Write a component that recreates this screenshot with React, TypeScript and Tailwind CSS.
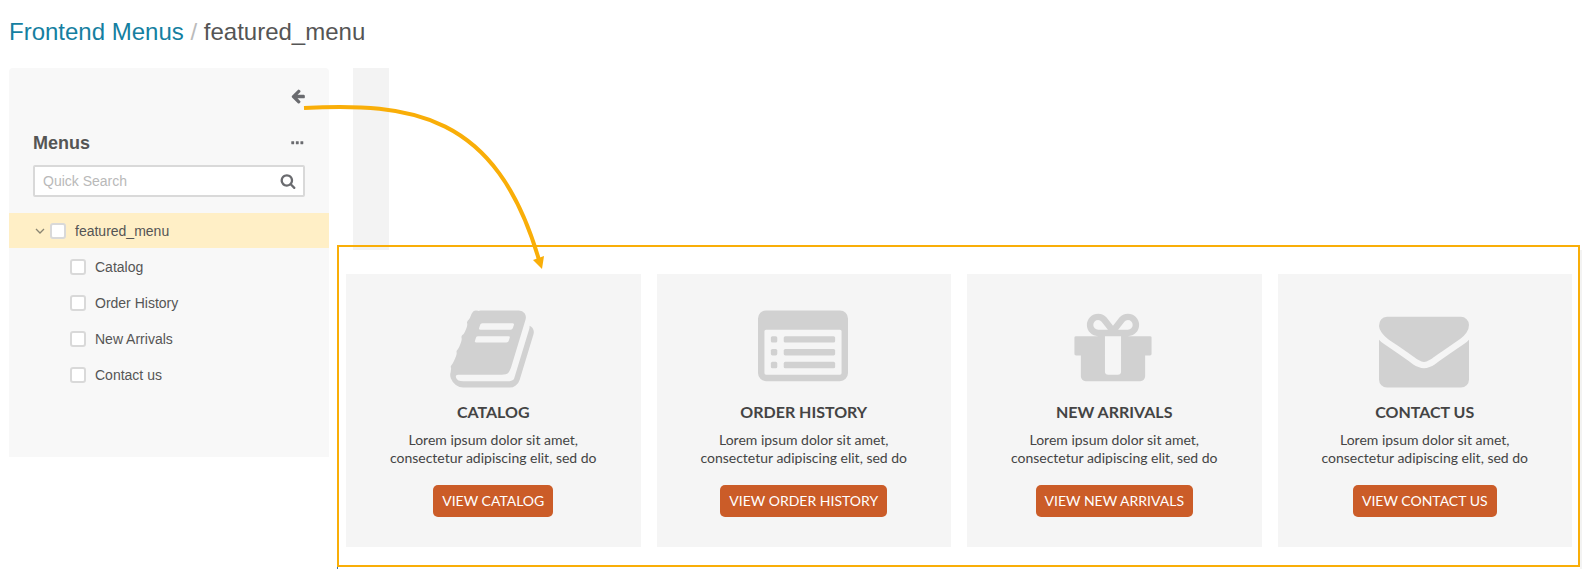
import React from "react";

const ARROW_LEFT =
  "M1664 896v128q0 53-32.5 90.5t-84.5 37.5h-704l293 294q38 36 38 90t-38 90l-75 76q-37 37-90 37-52 0-91-37l-651-652q-37-37-37-90 0-52 37-91l651-650q38-38 91-38 52 0 90 38l75 74q38 38 38 91t-38 91l-293 293h704q52 0 84.5 37.5t32.5 90.5z";
const ELLIPSIS =
  "M576 736v256q0 32-32 32h-256q-32 0-32-32v-256q0-32 32-32h256q32 0 32 32zm512 0v256q0 32-32 32h-256q-32 0-32-32v-256q0-32 32-32h256q32 0 32 32zm512 0v256q0 32-32 32h-256q-32 0-32-32v-256q0-32 32-32h256q32 0 32 32z";
const SEARCH =
  "M1216 832q0-185-131.5-316.5t-316.5-131.5-316.5 131.5-131.5 316.5 131.5 316.5 316.5 131.5 316.5-131.5 131.5-316.5zm512 832q0 52-38 90t-90 38q-54 0-90-38l-343-342q-179 124-399 124-143 0-273.5-55.5t-225-150-150-225-55.5-273.5 55.5-273.5 150-225 225-150 273.5-55.5 273.5 55.5 225 150 150 225 55.5 273.5q0 220-124 399l343 343q37 37 37 90z";
const BOOK =
  "M1703 478q40 57 18 129l-275 906q-19 64-76.5 107.5t-122.5 43.5h-923q-77 0-148.5-53.5t-99.5-131.5q-24-67-2-127 0-4 3-27t4-37q1-8-3-21.5t-3-19.5q2-11 8-21t16.5-23.5 16.5-23.5q23-38 45-91.5t30-91.5q3-10 .5-30t-.5-28q3-11 17-28t17-23q21-36 42-92t25-90q1-9-2.5-32t.5-28q4-13 22-30.5t22-22.5q19-26 42.5-84.5t27.5-96.5q1-8-3-25.5t-2-26.5q2-8 9-18t18-23 17-21q8-12 16.5-30.5t15-35 16-36 19.5-32 26.5-23.5 36-11.5 47.5 5.5l-1 3q38-9 51-9h761q74 0 114 56t18 130l-274 906q-36 119-71.5 153.5t-128.5 34.5h-869q-27 0-38 15-11 16-1 43 24 70 144 70h923q29 0 56-15.5t35-41.5l300-987q7-22 5-57 38 15 59 43zm-1064 2q-4 13 2 22.5t20 9.5h608q13 0 25.5-9.5t16.5-22.5l21-64q4-13-2-22.5t-20-9.5h-608q-13 0-25.5 9.5t-16.5 22.5zm-83 256q-4 13 2 22.5t20 9.5h608q13 0 25.5-9.5t16.5-22.5l21-64q4-13-2-22.5t-20-9.5h-608q-13 0-25.5 9.5t-16.5 22.5z";
const GIFT =
  "M1056 1356v-716h-320v716q0 25 18 38.5t46 13.5h192q28 0 46-13.5t18-38.5zm-456-844h195l-126-161q-26-31-69-31-40 0-68 28t-28 68 28 68 68 28zm688-96q0-40-28-68t-68-28q-43 0-69 31l-125 161h194q40 0 68-28t28-68zm376 256v320q0 14-9 23t-23 9h-96v416q0 40-28 68t-68 28h-1088q-40 0-68-28t-28-68v-416h-96q-14 0-23-9t-9-23v-320q0-14 9-23t23-9h440q-93 0-158.5-65.5t-65.5-158.5 65.5-158.5 158.5-65.5q107 0 168 77l128 165 128-165q61-77 168-77 93 0 158.5 65.5t65.5 158.5-65.5 158.5-158.5 65.5h440q14 0 23 9t9 23z";
const ENVELOPE =
  "M1792 710v794q0 66-47 113t-113 47h-1472q-66 0-113-47t-47-113v-794q44 49 101 87 362 246 497 345 57 42 92.5 65.5t94.5 48 110 24.5h2q51 0 110-24.5t94.5-48 92.5-65.5q170-123 498-345 57-39 100-87zm0-294q0 79-49 151t-122 123q-376 261-468 325-10 7-42.5 31t-54 38.5-52 32.5-57.5 27-50 9h-2q-23 0-50-9t-57.5-27-52-32.5-54-38.5-42.5-31q-91-64-262-182.5t-205-142.5q-62-42-117-115.5t-55-136.5q0-78 41.5-130t118.5-52h1472q65 0 112.5 47t47.5 113z";

function Glyph({ d, className }: { d: string; className: string }) {
  return (
    <svg viewBox="0 0 1792 1792" className={className} fill="currentColor" aria-hidden="true">
      <path d={d} />
    </svg>
  );
}

function ListGlyph({ className }: { className: string }) {
  return (
    <svg viewBox="0 0 1792 1792" className={className} fill="currentColor" aria-hidden="true">
      <path
        fillRule="evenodd"
        d="M160 128h1472q66 0 113 47t47 113v1088q0 66-47 113t-113 47h-1472q-66 0-113-47t-47-113v-1088q0-66 47-113t113-47zm0 384q-32 0-32 32v832q0 32 32 32h1472q32 0 32-32v-832q0-32-32-32z"
      />
      {[640, 896, 1152].map((y) => (
        <g key={y}>
          <rect x="256" y={y} width="128" height="128" rx="32" />
          <rect x="512" y={y} width="1024" height="128" rx="32" />
        </g>
      ))}
    </svg>
  );
}

const big = "block size-[90px]";

const cards = [
  { title: "CATALOG", icon: <Glyph d={BOOK} className={big} /> },
  { title: "ORDER HISTORY", icon: <ListGlyph className={big} /> },
  { title: "NEW ARRIVALS", icon: <Glyph d={GIFT} className={big} /> },
  { title: "CONTACT US", icon: <Glyph d={ENVELOPE} className={big} /> },
];

const items = ["Catalog", "Order History", "New Arrivals", "Contact us"];

function CheckItem({ label }: { label: string }) {
  return (
    <label className="flex items-center gap-[9px]">
      <input
        type="checkbox"
        className="size-4 shrink-0 appearance-none rounded-[3px] border-2 border-[#d9d9d9] bg-white checked:bg-[#157fa1]"
      />
      {label}
    </label>
  );
}

function Sidebar() {
  return (
    <aside className="w-80 shrink-0 rounded-t bg-[#f8f8f8] pt-5 pb-16 text-[#555]">
      <div className="flex justify-end pr-[23px]">
        <button type="button" aria-label="Collapse" className="text-[#6a6b6f]">
          <Glyph d={ARROW_LEFT} className="block size-4" />
        </button>
      </div>
      <div className="mt-[27px] flex items-center justify-between px-6">
        <h2 className="text-lg leading-6 font-bold">Menus</h2>
        <button type="button" aria-label="More actions" className="text-[#6a6b6f]">
          <Glyph d={ELLIPSIS} className="block size-4" />
        </button>
      </div>
      <div className="mx-6 mt-[10px] flex h-8 items-center rounded-[2px] border-2 border-[#d9d9d9] bg-white pr-[7px] pl-2">
        <input
          type="text"
          aria-label="Quick Search"
          placeholder="Quick Search"
          className="min-w-0 flex-1 text-sm outline-none placeholder:text-[#b9b9b9]"
        />
        <button type="button" aria-label="Search" className="text-[#6a6b6f]">
          <Glyph d={SEARCH} className="block size-4" />
        </button>
      </div>
      <ul className="mt-4 text-sm">
        <li>
          <div className="mb-px flex h-[35px] items-center gap-[5px] bg-[#ffefc6] pl-[26px]">
            <svg viewBox="0 0 10 10" className="size-[10px]" fill="none" stroke="#8a8572" strokeWidth="1.3" aria-hidden="true">
              <path d="M1 3l4 4 4-4" />
            </svg>
            <CheckItem label="featured_menu" />
          </div>
          <ul>
            {items.map((t) => (
              <li key={t} className="flex h-9 items-center pl-[61px]">
                <CheckItem label={t} />
              </li>
            ))}
          </ul>
        </li>
      </ul>
    </aside>
  );
}

export default function App() {
  return (
    <div className="relative flex min-h-screen flex-col bg-white font-['Liberation_Sans',Arial,sans-serif]">
      <h1 className="px-[9px] pt-4 text-2xl leading-8 text-[#555]">
        <a href="#" className="text-[#157fa1]">Frontend Menus</a>
        <span className="text-[#bbb]"> / </span>
        featured_menu
      </h1>
      <div className="mt-5 flex flex-1 gap-2 pl-[9px]">
        <div>
          <Sidebar />
        </div>
        <div className="flex min-w-0 flex-1 flex-col">
          <div className="ml-4 h-[182px] w-9 bg-[#f3f3f3]" />
          <div className="flex flex-1 flex-col border-r-2 border-[#f3f3f3]">
            <main className="-mt-[5px] grid grid-cols-4 gap-4 border-2 border-[#f9ae08] pt-[27px] pr-[6px] pb-[18px] pl-[7px] font-[Lato,sans-serif] text-[#444]">
              {cards.map((c) => (
                <section key={c.title} className="flex flex-col items-center bg-[#f5f5f5] px-10 pt-[30px] pb-[30px] text-center">
                  <div className="pr-[2px] text-[#d1d1d1]">{c.icon}</div>
                  <h3 className="mt-[6px] text-base leading-6 font-bold">{c.title}</h3>
                  <p className="mt-[7px] max-w-[220px] text-sm leading-[18px]">
                    Lorem ipsum dolor sit amet, consectetur adipiscing elit, sed do
                  </p>
                  <button type="button" className="mt-[18px] h-8 rounded-[5px] bg-[#cb5c28] px-[9px] text-sm text-white">
                    VIEW {c.title}
                  </button>
                </section>
              ))}
            </main>
            <div className="h-[2px] w-px bg-[#2f6db5]" />
          </div>
        </div>
      </div>
      <svg
        viewBox="0 0 260 180"
        className="pointer-events-none absolute top-[95px] left-[295px] h-[180px] w-[260px]"
        fill="none"
        aria-hidden="true"
      >
        <path d="M9 13C115 8 201 17 244 165" stroke="#f9ae08" strokeWidth="4" />
        <path d="M238 165L249 161L247 174Z" fill="#f9ae08" />
      </svg>
    </div>
  );
}
